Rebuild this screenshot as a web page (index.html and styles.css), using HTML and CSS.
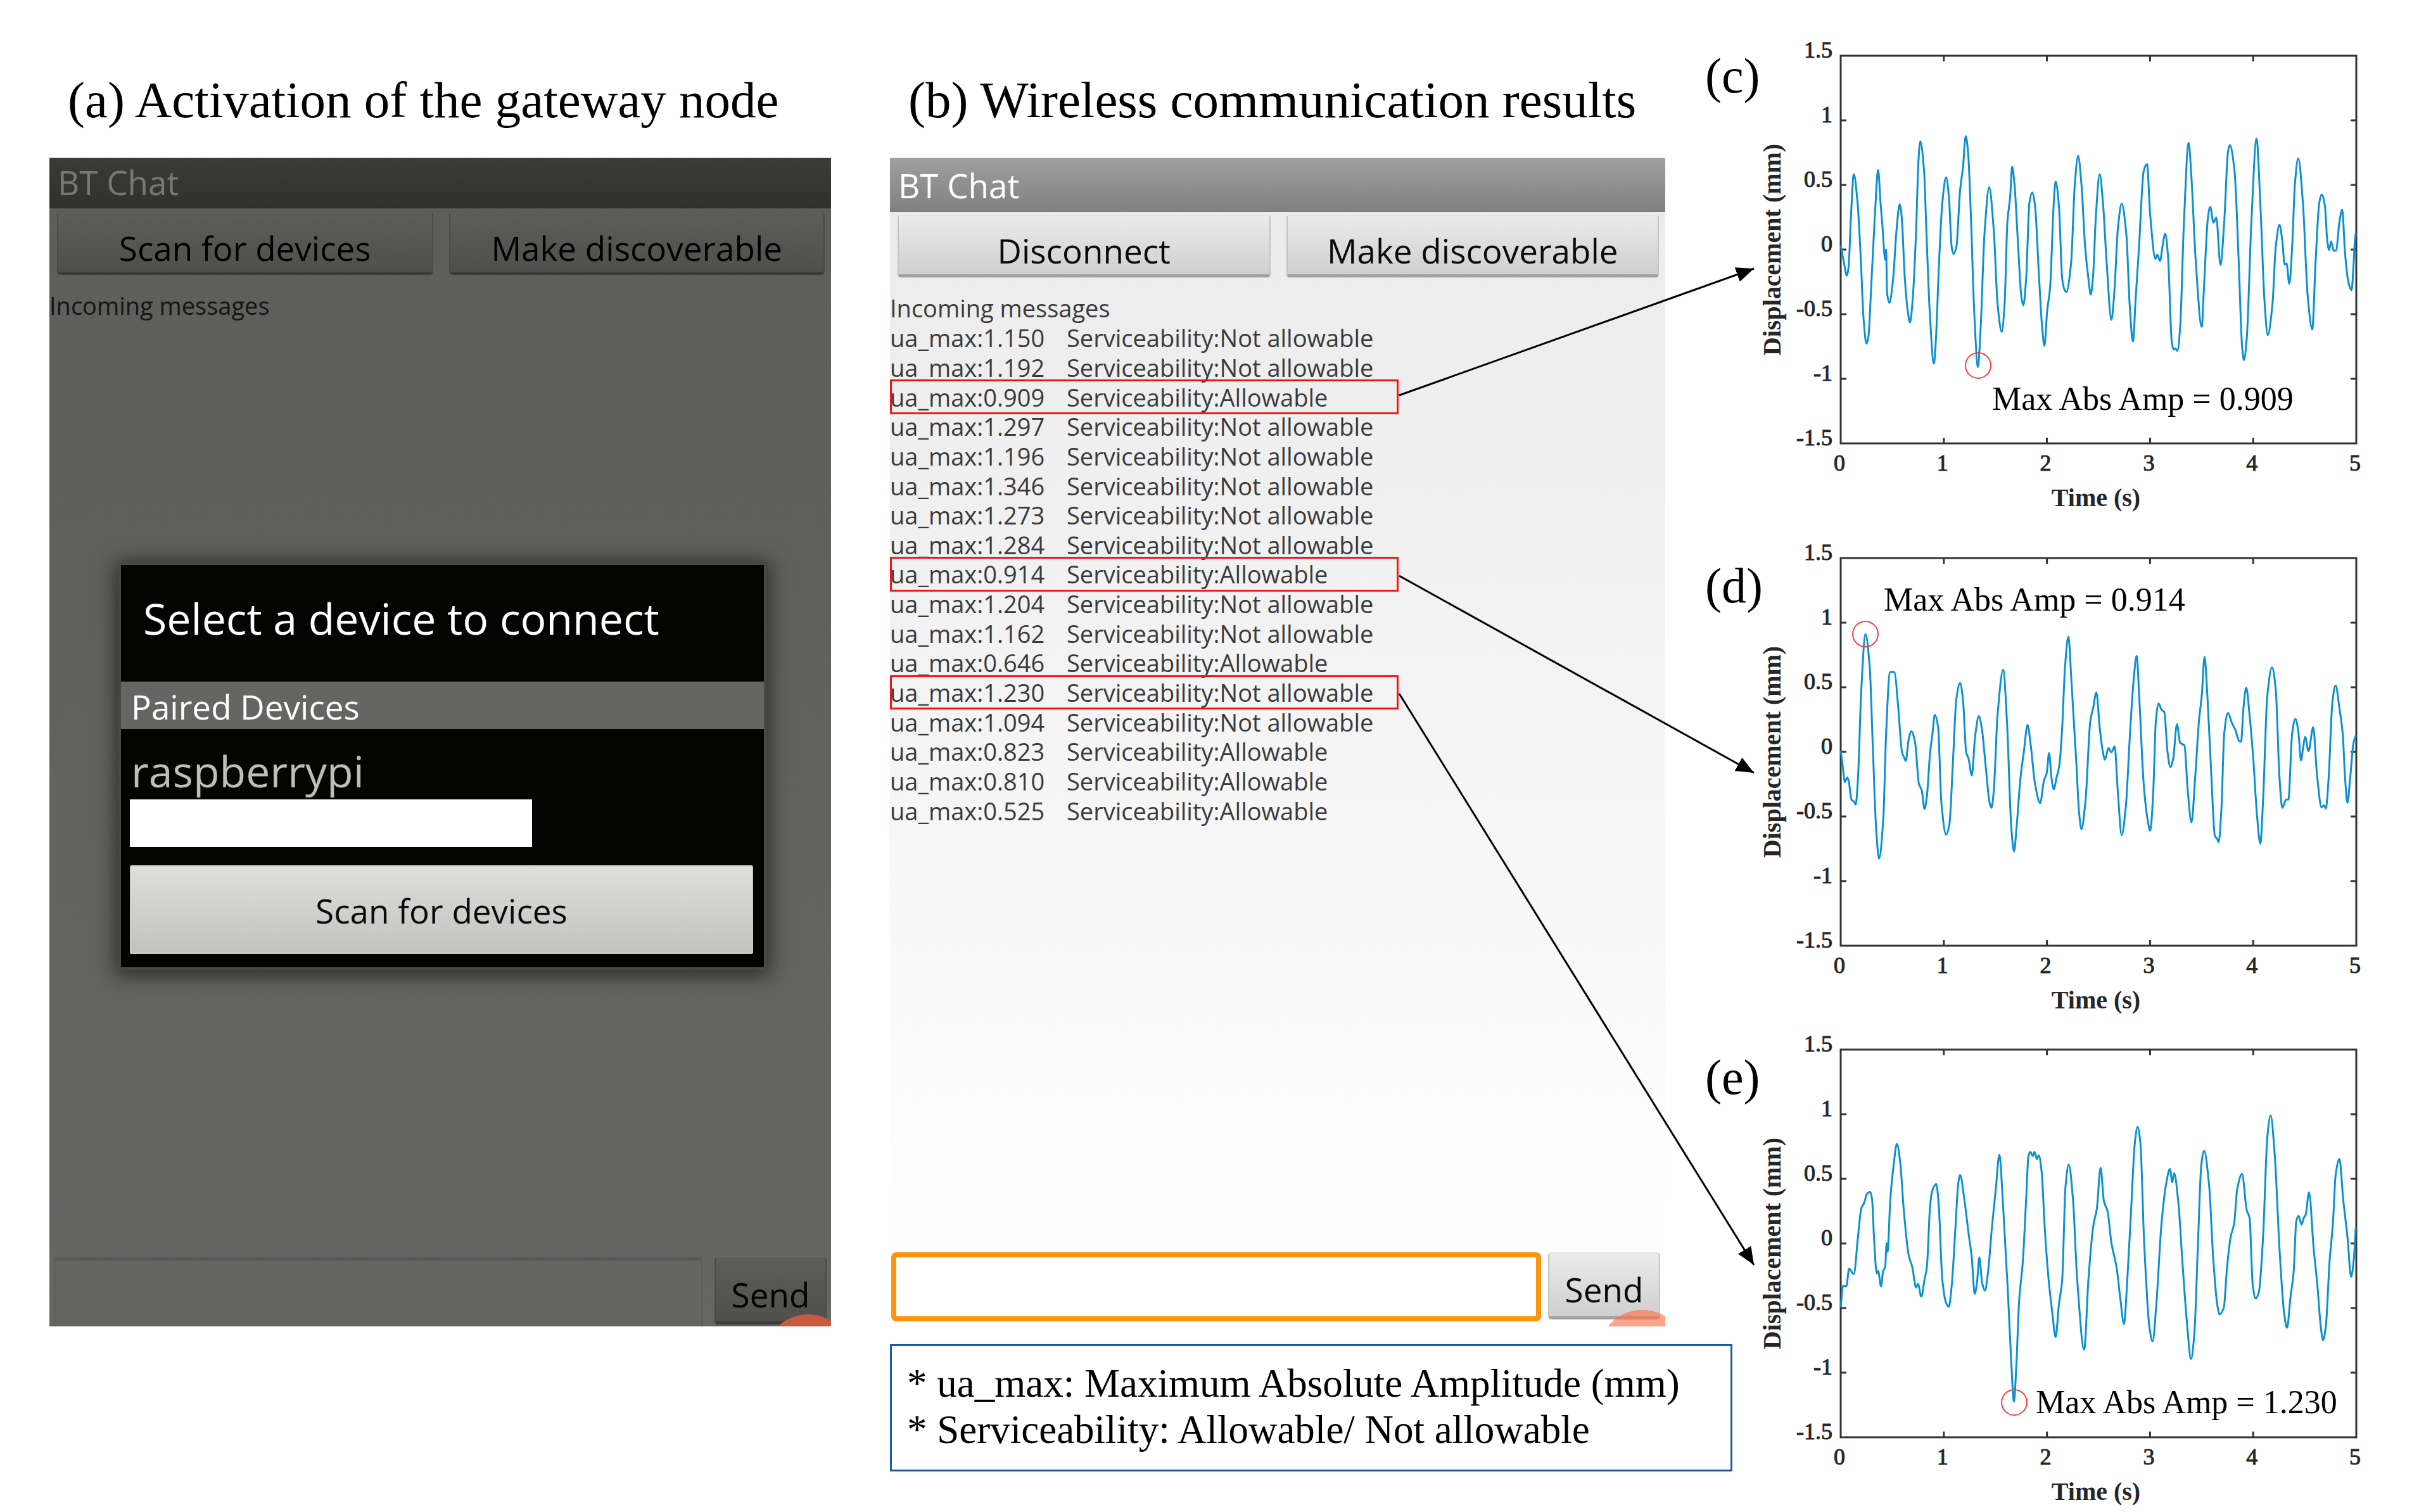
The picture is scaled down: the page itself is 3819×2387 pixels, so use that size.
FILE: index.html
```html
<!DOCTYPE html>
<html lang="en">
  <head>
    <meta charset="UTF-8" />
    <title>BT Chat - Wireless communication results</title>
    <meta name="viewport" content="width=device-width, initial-scale=1.0" />
    <link rel="stylesheet" href="styles.css">
  </head>
  <body>
    <main class="figure">
      <section class="panel panel-a">
        <h2>(a) Activation of the gateway node</h2>
        <div class="phone dimmed">
          <div class="title-bar">BT Chat</div>
          <div class="actions">
            <button type="button">Scan for devices</button>
            <button type="button">Make discoverable</button>
          </div>
          <p class="incoming">Incoming messages</p>
          <form class="compose">
            <input type="text" aria-label="Message" />
            <button type="button">Send</button>
          </form>
          <span class="touch"></span>

          <div class="dialog">
            <h3>Select a device to connect</h3>
            <div class="paired">Paired Devices</div>
            <div class="device">raspberrypi</div>
            <div class="address"></div>
            <button type="button">Scan for devices</button>
          </div>
        </div>
      </section>

      <section class="panel panel-b">
        <h2>(b) Wireless communication results</h2>
        <div class="phone">
          <div class="title-bar">BT Chat</div>
          <div class="actions">
            <button type="button">Disconnect</button>
            <button type="button">Make discoverable</button>
          </div>
          <p class="incoming">Incoming messages</p>
          <table class="messages">
            <tbody>
              <tr><td>ua_max:1.150</td><td>Serviceability:Not allowable</td></tr>
              <tr><td>ua_max:1.192</td><td>Serviceability:Not allowable</td></tr>
              <tr class="marked"><td>ua_max:0.909</td><td>Serviceability:Allowable</td></tr>
              <tr><td>ua_max:1.297</td><td>Serviceability:Not allowable</td></tr>
              <tr><td>ua_max:1.196</td><td>Serviceability:Not allowable</td></tr>
              <tr><td>ua_max:1.346</td><td>Serviceability:Not allowable</td></tr>
              <tr><td>ua_max:1.273</td><td>Serviceability:Not allowable</td></tr>
              <tr><td>ua_max:1.284</td><td>Serviceability:Not allowable</td></tr>
              <tr class="marked"><td>ua_max:0.914</td><td>Serviceability:Allowable</td></tr>
              <tr><td>ua_max:1.204</td><td>Serviceability:Not allowable</td></tr>
              <tr><td>ua_max:1.162</td><td>Serviceability:Not allowable</td></tr>
              <tr><td>ua_max:0.646</td><td>Serviceability:Allowable</td></tr>
              <tr class="marked"><td>ua_max:1.230</td><td>Serviceability:Not allowable</td></tr>
              <tr><td>ua_max:1.094</td><td>Serviceability:Not allowable</td></tr>
              <tr><td>ua_max:0.823</td><td>Serviceability:Allowable</td></tr>
              <tr><td>ua_max:0.810</td><td>Serviceability:Allowable</td></tr>
              <tr><td>ua_max:0.525</td><td>Serviceability:Allowable</td></tr>
            </tbody>
          </table>
          <form class="compose">
            <input type="text" aria-label="Message" />
            <button type="button">Send</button>
          </form>
          <span class="touch"></span>
        </div>
        <div class="notes">
          <p>* ua_max: Maximum Absolute Amplitude (mm)</p>
          <p>* Serviceability: Allowable/ Not allowable</p>
        </div>
      </section>

      <section class="plots">
        <div class="plot plot-c">
          <span class="tag">(c)</span>
          <svg id="plotC" viewBox="0 0 1049 758"></svg>
        </div>
        <div class="plot plot-d">
          <span class="tag">(d)</span>
          <svg id="plotD" viewBox="0 0 1049 758"></svg>
        </div>
        <div class="plot plot-e">
          <span class="tag">(e)</span>
          <svg id="plotE" viewBox="0 0 1049 758"></svg>
        </div>
      </section>

      <!-- arrows from the marked messages to their plots -->
      <svg class="arrows" viewBox="0 0 3819 2387" preserveAspectRatio="none">
        <defs>
          <marker id="head" viewBox="0 0 28 24" refX="28" refY="12" markerWidth="28" markerHeight="24" markerUnits="userSpaceOnUse" orient="auto">
            <path d="M0 0 L28 12 L0 24 Z" />
          </marker>
        </defs>
        <line x1="2209" y1="624" x2="2769" y2="424" marker-end="url(#head)" />
        <line x1="2209" y1="909" x2="2769" y2="1220" marker-end="url(#head)" />
        <line x1="2209" y1="1095" x2="2769" y2="1997" marker-end="url(#head)" />
      </svg>
    </main>

    <script src="plots.js"></script>
  </body>
</html>
```
FILE: styles.css
```css
* {
  box-sizing: border-box;
}

body {
  margin: 0;
  background-color: #fff;
  color: #000;
  font-family: "Liberation Serif", "Times New Roman", serif;
}

.figure {
  position: relative;
  display: grid;
  grid-template-columns: 1327fr 1287fr 1127fr;
  padding-left: 78px;
}

.panel-a {
  padding-right: 93px;
}

.panel-b {
  padding-right: 63px;
}

h2 {
  margin: 0;
  padding: 108px 0 41px 29px;
  font-size: 81px;
  font-weight: normal;
  line-height: 100px;
  white-space: nowrap;
}

/* phone screens */
.phone {
  position: relative;
  display: flex;
  flex-direction: column;
  min-height: 1845px;
  overflow: hidden;
  background: linear-gradient(#ebebeb, #f1f1f1 35%, #fdfdfd 85%, #fff);
  color: #3a3a3a;
  font-family: "Open Sans", "Noto Sans", sans-serif;
}

.title-bar {
  height: 86px;
  padding: 5px 13px 0;
  background: linear-gradient(#a0a0a0, #808080);
  color: #fff;
  font-size: 53px;
  line-height: 78px;
}

.actions {
  display: flex;
  gap: 25px;
  padding: 4px 10px 0 12px;
}

.actions button {
  flex: 1;
  height: 99px;
  padding-top: 18px;
}

button {
  border: 2px solid #c4c4c4;
  border-top-color: #e4e4e4;
  border-bottom: 5px solid #a2a2a2;
  border-radius: 5px;
  padding: 14px 0 0;
  background: linear-gradient(#ebebeb, #cfcfcf);
  color: #0a0a0a;
  font-family: inherit;
  font-size: 53px;
  line-height: 60px;
}

.incoming {
  margin: 25px 0 0;
  font-size: 38px;
  line-height: 47px;
}

.messages {
  width: 803px;
  height: 793px;
  border-collapse: collapse;
  font-size: 38px;
  line-height: 46px;
}

.messages tr {
  position: relative;
}

.messages td {
  padding: 0;
  white-space: nowrap;
}

.messages td:first-child {
  width: 279px;
}

.marked td:first-child::after {
  content: "";
  position: absolute;
  inset: -4px 0;
  border: 3px solid #f81414;
}

.compose {
  display: flex;
  gap: 11px;
  margin-top: auto;
  padding: 0 8px 8px 2px;
}

.compose input {
  flex: 1;
  height: 109px;
  border: 8px solid #ff930f;
  border-radius: 8px;
  padding: 0 16px;
  background-color: #fff;
  font-family: inherit;
  font-size: 53px;
}

.compose button {
  width: 177px;
  height: 106px;
}

.touch {
  position: absolute;
  right: -34px;
  bottom: -114px;
  width: 140px;
  height: 140px;
  border-radius: 50%;
  background-color: rgba(255, 112, 72, 0.65);
}

/* dimmed screen behind the dialog */
.dimmed {
  background: linear-gradient(#5d5e5a, #666664);
  color: #141414;
}

.dimmed .title-bar {
  height: 80px;
  padding-top: 0;
  background: linear-gradient(#3b3b39, #30302c);
  color: #777775;
}

.dimmed .actions {
  padding-top: 6px;
}

.dimmed .actions button,
.dimmed .compose button {
  border-color: #50504e #4a4a48 #3c3c3a;
  border-top-color: #5b5c58;
  background: linear-gradient(#5c5d58, #4f4f4d);
  color: #000;
}

.dimmed .compose {
  gap: 18px;
  padding: 0 7px 0 7px;
}

.dimmed .compose input {
  border: 3px solid #5f605c;
  border-top: 5px solid #575853;
  border-bottom: 0;
  border-radius: 2px;
  background-color: #656563;
}

.dimmed .touch {
  bottom: -121px;
  background-color: #c65b3f;
}

.dialog {
  position: absolute;
  top: 643px;
  left: 113px;
  right: 106px;
  padding-bottom: 21px;
  background-color: #030302;
  color: #fff;
  box-shadow: 0 0 0 4px #484945, 0 4px 28px 10px rgba(30, 30, 26, 0.75);
}

.dialog h3 {
  margin: 0;
  padding: 38px 35px 54px;
  font-size: 68px;
  font-weight: normal;
  line-height: 92px;
}

.paired {
  padding: 5px 16px 0;
  background-color: #656563;
  font-size: 53px;
  line-height: 70px;
}

.device {
  padding: 20px 16px 0;
  color: #bdbdbb;
  font-size: 68px;
  line-height: 91px;
}

.address {
  width: 635px;
  height: 75px;
  margin-left: 14px;
  background-color: #fff;
}

.dialog button {
  display: block;
  width: calc(100% - 31px);
  height: 140px;
  margin: 29px 17px 0 14px;
  border: 2px solid #c9c9c7;
  border-radius: 3px;
  padding: 4px 0 0;
  background: linear-gradient(#dededc, #c2c2c0);
}

.notes {
  margin: 28px -106px 0 0;
  border: 3px solid #1f5c9f;
  padding: 23px 24px 26px;
  font-size: 63px;
  line-height: 73px;
  white-space: nowrap;
}

.notes p {
  margin: 0;
}

/* displacement plots */
.plots {
  padding-top: 60px;
}

.plot {
  display: flex;
}

.plot-c {
  margin-bottom: 35px;
}

.plot-d {
  margin-bottom: 18px;
}

.tag {
  flex: none;
  width: 78px;
  padding-top: 32px;
  font-size: 78px;
  line-height: 80px;
  white-space: nowrap;
}

.plot-c .tag {
  padding-top: 20px;
}

.plot svg {
  flex: 1;
  min-width: 0;
  overflow: visible;
}

.axis {
  fill: none;
  stroke: #333;
  stroke-width: 3;
}

.tick-label {
  fill: #262626;
  font-size: 36px;
  stroke: #262626;
  stroke-width: 1;
}

.axis-label {
  fill: #262626;
  font-size: 40px;
  font-weight: bold;
  text-anchor: middle;
}

.wave {
  fill: none;
  stroke: #0b90d0;
  stroke-width: 3;
  stroke-linejoin: round;
  vector-effect: non-scaling-stroke;
}

.peak {
  fill: none;
  stroke: #ff3b3b;
  stroke-width: 2;
}

.peak-label {
  font-size: 52px;
}

.arrows {
  position: absolute;
  top: 0;
  left: 0;
  width: 100%;
  height: 100%;
  pointer-events: none;
}

.arrows line {
  stroke: #000;
  stroke-width: 3;
}
```
FILE: plots.js
```js
// axes box inside each svg
const box = { x: 136, y: 28, w: 814, h: 612 };

// wave: x,y pairs in the units of "view"
const plots = [
  {
    id: "plotC",
    view: "333 96 1101 1224",
    peak: [353, 517],
    label: [375, 587, "Max Abs Amp = 0.909"],
    wave: `333,695 340,750 346,790 350,760 355,600 361,470 369,560 376,740 382,930 388,1005 392,985 398,830 406,600 413,457
      418,560 422,630 428,740 430,708 432,845 437,876 445,800 452,650 459,565 463,600 470,800 476,900 481,938 487,860
      494,650 499,430 503,366 511,460 516,650 523,900 532,1068 536,1000 543,750 550,560 558,480 564,540 570,700 574,722
      580,700 588,520 594,450 600,350 605,400 611,600 618,900 626,1078 632,950 640,660 650,511 660,650 668,880 677,968
      683,880 689,620 695,540 699,446 704,500 712,700 719,860 723,884 729,800 736,560 742,528 748,570 756,780 763,950
      768,1012 774,900 780,830 788,560 792,493 799,570 806,800 811,835 815,842 825,750 833,500 840,412 847,500 855,700
      862,800 867,850 872,790 878,600 886,470 893,560 901,750 911,930 917,850 925,640 933,563 943,660 950,880 957,998
      963,860 970,700 980,460 987,438 994,600 1005,737 1009,724 1015,744 1020,700 1026,658 1032,730 1040,1000 1044,1024
      1048,1020 1052,1028 1058,950 1066,620 1076,371 1082,480 1091,740 1104,952 1109,820 1117,610 1122,573 1129,623
      1135,607 1144,757 1152,620 1160,400 1164,378 1174,460 1183,750 1190,1010 1194,1057 1200,990 1210,620 1221,358
      1229,560 1238,870 1245,978 1255,880 1262,700 1270,630 1276,680 1281,755 1285,752 1291,816 1297,700 1303,500
      1310,420 1320,560 1330,850 1340,960 1347,750 1355,560 1360,534 1367,570 1372,680 1376,709 1380,682 1386,712
      1391,710 1398,620 1404,582 1410,720 1417,810 1424,836 1428,760 1431,680 1433,655`,
  },
  {
    id: "plotD",
    view: "333 83 1101 1231",
    peak: [175, 148],
    label: [204, 111, "Max Abs Amp = 0.914"],
    wave: `333,695 337,740 342,794 347,780 350,790 356,850 361,856 365,866 370,780 377,500 386,325 395,430 402,700 409,950
      415,1037 424,910 430,640 438,446 443,444 448,446 456,560 464,700 468,715 472,727 478,660 484,633 492,670 500,800
      506,820 512,880 517,840 524,700 529,640 534,581 541,620 548,860 558,961 565,930 573,720 580,530 588,480 594,530
      601,700 606,720 613,773 620,650 628,585 634,620 643,750 651,860 655,876 660,820 668,580 680,438 688,600 697,930
      703,1015 709,930 717,780 724,700 732,613 739,680 748,800 759,861 767,790 773,765 778,702 783,780 788,817 794,780
      800,740 806,620 812,430 819,333 826,480 836,730 842,890 847,944 856,850 866,600 872,560 879,510 886,620 893,700
      897,723 905,686 911,700 918,681 925,830 933,963 942,870 950,660 958,480 965,394 971,540 980,800 988,910 994,949
      1000,840 1006,600 1012,545 1018,565 1024,572 1031,700 1037,747 1043,720 1051,611 1058,670 1067,678 1074,820
      1082,922 1090,780 1098,600 1104,520 1110,397 1116,520 1124,760 1132,965 1137,975 1140,985 1146,880 1152,640
      1160,575 1168,605 1176,630 1184,664 1188,666 1193,560 1199,495 1206,580 1214,720 1222,900 1229,990 1235,850
      1244,520 1254,430 1262,500 1270,780 1276,876 1284,850 1289,850 1297,640 1304,594 1310,630 1316,725 1320,690
      1325,651 1332,696 1342,620 1350,770 1360,875 1365,868 1369,878 1375,780 1383,540 1390,488 1398,560 1405,640
      1410,780 1415,860 1421,780 1428,670 1433,646`,
  },
  {
    id: "plotE",
    view: "333 76 1101 1254",
    peak: [410, 585],
    label: [444, 602, "Max Abs Amp = 1.230"],
    wave: `333,910 338,840 345,842 351,785 361,802 370,680 377,590 383,572 389,543 396,536 400,560 404,680 410,800 413,792
      419,842 424,790 428,780 431,702 433,730 439,560 446,450 453,381 460,440 468,600 478,740 486,780 494,846 498,833
      505,875 512,820 517,780 524,580 529,530 537,511 542,570 550,820 558,895 564,908 570,840 577,680 584,510 588,482
      597,560 606,670 613,750 619,866 624,830 629,748 635,830 641,855 648,790 656,650 664,530 672,416 679,560 690,860
      697,1080 703,1215 708,1100 714,890 722,760 729,560 734,420 738,407 743,420 747,407 752,430 756,418 762,470 769,660
      777,820 785,930 792,1006 799,900 806,820 813,520 820,448 829,560 838,820 853,1046 862,820 872,650 880,590 888,458
      895,565 903,600 911,700 922,780 930,880 938,964 945,820 953,600 961,380 967,326 973,380 981,700 992,970 999,1020
      1007,900 1018,640 1028,510 1036,462 1041,505 1045,476 1054,570 1063,770 1073,970 1081,1077 1088,1000 1096,700
      1103,450 1109,404 1120,520 1128,740 1137,900 1142,932 1151,912 1158,780 1166,680 1173,640 1180,525 1190,478
      1200,595 1206,620 1213,840 1219,881 1226,860 1235,680 1244,360 1251,289 1260,420 1270,720 1280,930 1286,976
      1294,870 1300,800 1306,630 1311,614 1317,642 1322,620 1326,610 1333,538 1343,720 1351,840 1358,970 1363,1016
      1369,970 1377,760 1384,640 1390,480 1398,430 1406,560 1415,680 1423,811 1429,750 1433,650`,
  },
];

// monotone cubic through the points, flat at every peak
function smooth(text) {
  const p = text.trim().split(/\s+/).map((s) => s.split(",").map(Number));
  const slope = (i) => (p[i + 1][1] - p[i][1]) / (p[i + 1][0] - p[i][0]);
  const m = p.map((_, i) => {
    if (i === 0) return slope(0);
    if (i === p.length - 1) return slope(i - 1);
    const a = slope(i - 1);
    const b = slope(i);
    return a * b <= 0 ? 0 : (2 * a * b) / (a + b);
  });
  let d = `M${p[0]}`;
  for (let i = 1; i < p.length; i++) {
    const h = (p[i][0] - p[i - 1][0]) / 3;
    d += `C${p[i - 1][0] + h},${p[i - 1][1] + m[i - 1] * h} ${p[i][0] - h},${p[i][1] - m[i] * h} ${p[i]}`;
  }
  return d;
}

function draw(plot) {
  const right = box.x + box.w;
  const bottom = box.y + box.h;
  let axis = `M${box.x} ${box.y}H${right}V${bottom}H${box.x}Z`;
  let labels = "";

  for (let i = 0; i <= 5; i++) {
    const x = box.x + (box.w * i) / 5;
    axis += `M${x} ${box.y}v9M${x} ${bottom}v-9`;
    labels += `<text class="tick-label" x="${x - 2}" y="${bottom + 43}" text-anchor="middle">${i}</text>`;
  }
  ["1.5", "1", "0.5", "0", "-0.5", "-1", "-1.5"].forEach((t, i) => {
    const y = box.y + (box.h * i) / 6;
    axis += `M${box.x} ${y}h9M${right} ${y}h-9`;
    labels += `<text class="tick-label" x="123" y="${y + 3}" text-anchor="end">${t}</text>`;
  });

  document.getElementById(plot.id).innerHTML = `
    <path class="axis" d="${axis}" />
    ${labels}
    <text class="axis-label" x="${box.x + box.w / 2 - 4}" y="${bottom + 99}">Time (s)</text>
    <text class="axis-label" transform="translate(41 ${box.y + box.h / 2}) rotate(-90)">Displacement (mm)</text>
    <svg x="${box.x}" y="${box.y}" width="${box.w}" height="${box.h}" viewBox="${plot.view}" preserveAspectRatio="none">
      <path class="wave" d="${smooth(plot.wave)}" />
    </svg>
    <circle class="peak" cx="${plot.peak[0]}" cy="${plot.peak[1]}" r="20" />
    <text class="peak-label" x="${plot.label[0]}" y="${plot.label[1]}">${plot.label[2]}</text>`;
}

plots.forEach(draw);
```
